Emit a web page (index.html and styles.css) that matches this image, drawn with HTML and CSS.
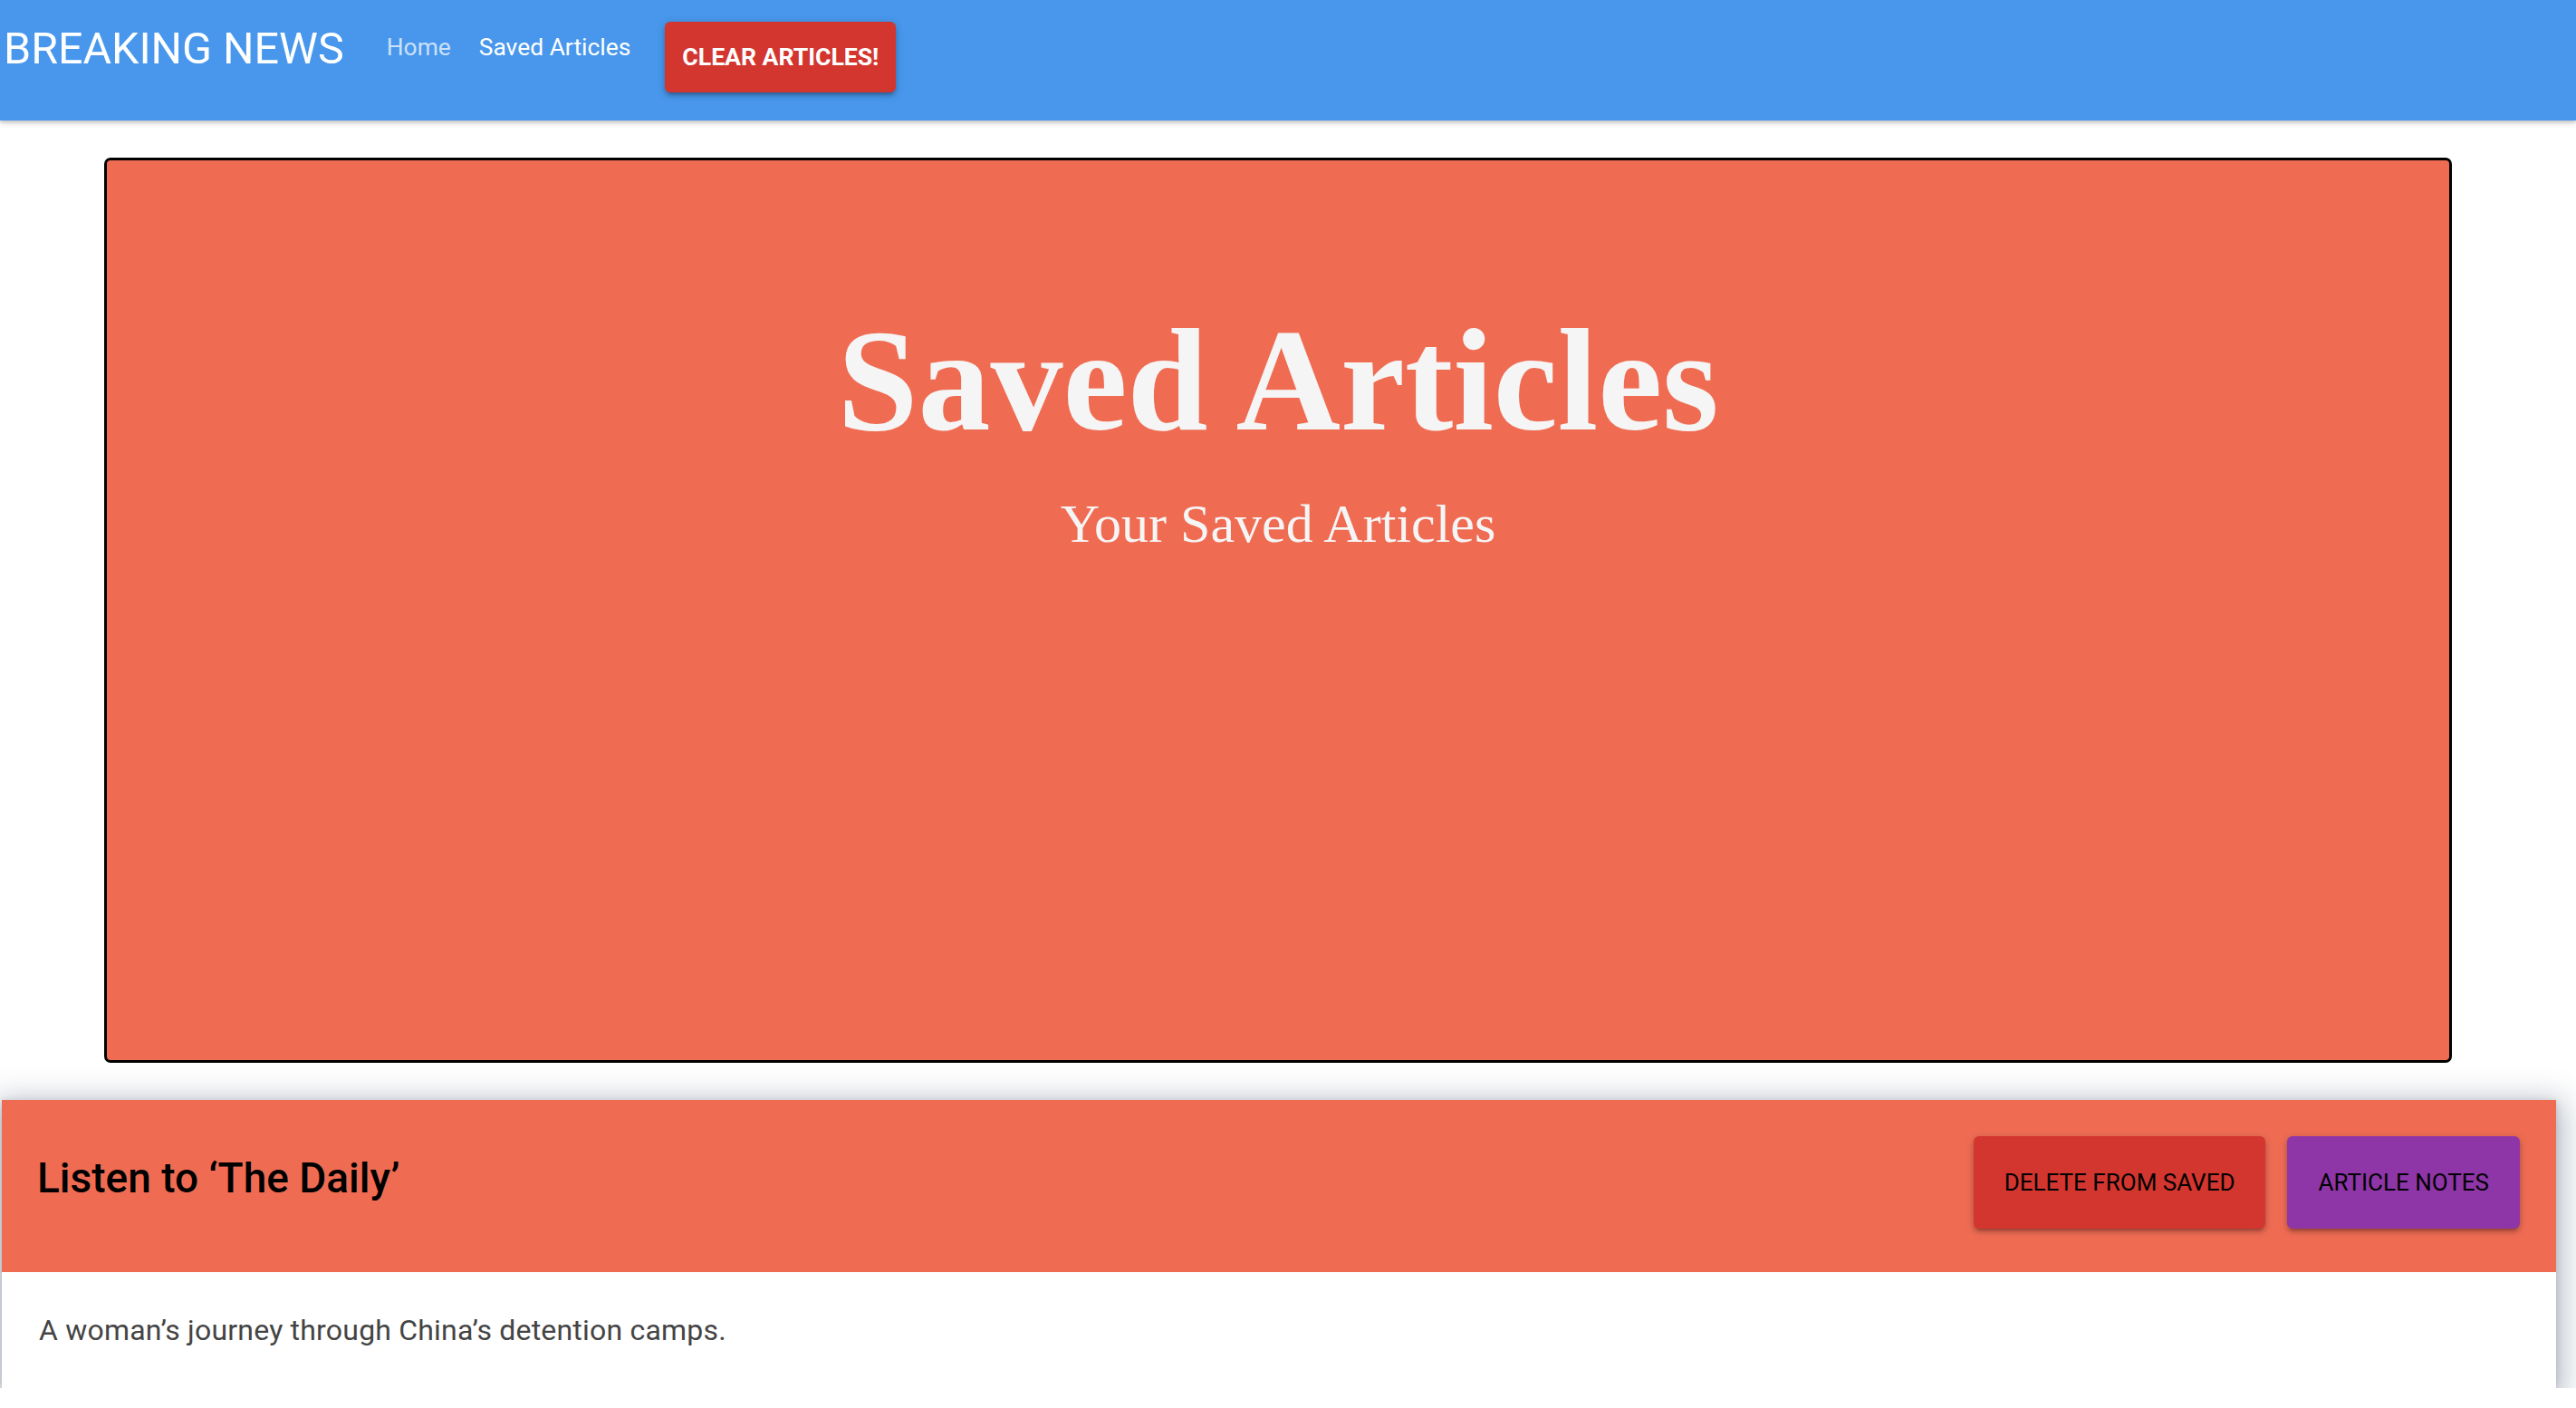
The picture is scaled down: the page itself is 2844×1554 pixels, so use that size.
FILE: index.html
```html
<!DOCTYPE html>
<html lang="en">
<head>
<meta charset="utf-8">
<title>Saved Articles</title>
<link rel="stylesheet" href="styles.css">
</head>
<body>
<nav class="navbar">
  <a class="brand" href="#">BREAKING NEWS</a>
  <ul class="nav-links">
    <li><a class="nav-link nav-link-muted" href="#">Home</a></li>
    <li><a class="nav-link" href="#">Saved Articles</a></li>
  </ul>
  <button class="btn-clear">CLEAR ARTICLES!</button>
</nav>
<main class="page">
  <section class="hero">
    <h1 class="hero-title">Saved Articles</h1>
    <h2 class="hero-subtitle">Your Saved Articles</h2>
  </section>
  <article class="card">
    <div class="card-header">
      <h3 class="card-title">Listen to ‘The Daily’</h3>
      <div class="card-actions">
        <button class="btn btn-delete">DELETE FROM SAVED</button>
        <button class="btn btn-notes">ARTICLE NOTES</button>
      </div>
    </div>
    <div class="card-body">
      <p class="card-summary">A woman’s journey through China’s detention camps.</p>
    </div>
  </article>
</main>
</body>
</html>
```
FILE: styles.css
```css
* { box-sizing: border-box; }
html, body { margin: 0; padding: 0; background: #ffffff; }
body { font-family: Roboto, "Liberation Sans", Arial, sans-serif; overflow: hidden; }

.navbar {
  display: flex;
  align-items: flex-start;
  height: 133px;
  background: #4897ec;
  box-shadow: 0 3px 6px rgba(0, 0, 0, 0.16), 0 2px 3px rgba(0, 0, 0, 0.10);
  position: relative;
  z-index: 2;
}
.brand {
  font-size: 48.4px;
  line-height: 1;
  font-weight: 400;
  color: #ffffff;
  text-decoration: none;
  margin: 30px 0 0 4px;
  white-space: nowrap;
}
.nav-links {
  display: flex;
  list-style: none;
  margin: 39px 0 0 47px;
  padding: 0;
  gap: 31px;
}
.nav-link {
  font-size: 26.4px;
  line-height: 1;
  color: #ffffff;
  text-decoration: none;
  white-space: nowrap;
}
.nav-link-muted { color: rgba(255, 255, 255, 0.72); }
.btn-clear {
  margin: 24px 0 0 38px;
  height: 78px;
  padding: 0 19px;
  border: none;
  border-radius: 6px;
  background: #d3352f;
  color: #ffffff;
  font-family: Roboto, "Liberation Sans", Arial, sans-serif;
  font-size: 26.6px;
  font-weight: 700;
  line-height: 1;
  box-shadow: 0 4px 4px rgba(0, 0, 0, 0.14), 0 6px 2px -4px rgba(0, 0, 0, 0.12), 0 2px 10px rgba(0, 0, 0, 0.2);
}

.page { width: 2822px; }

.hero {
  width: 2592px;
  height: 999px;
  margin: 41px auto 0;
  background: #ef6c53;
  border: 3px solid #000000;
  border-radius: 7px;
  text-align: center;
  color: #f5f5f5;
  font-family: "Liberation Serif", "Times New Roman", Times, serif;
}
.hero-title {
  margin: 163px 0 0;
  font-size: 160px;
  line-height: 1;
  font-weight: 700;
}
.hero-subtitle {
  margin: 48px 0 0;
  font-size: 60px;
  line-height: 1;
  font-weight: 400;
}

.card {
  width: 2820px;
  margin: 41px 0 0 2px;
  background: #ffffff;
  box-shadow: 0 8px 32px 8px rgba(45, 65, 95, 0.34), 0 2px 8px rgba(0, 0, 0, 0.14);
}
.card-header {
  display: flex;
  align-items: flex-start;
  justify-content: space-between;
  height: 190px;
  padding: 0 40px 0 39px;
  background: #ef6c53;
}
.card-title {
  margin: 63px 0 0;
  font-size: 46px;
  line-height: 1;
  font-weight: 500;
  color: #000000;
}
.card-actions {
  display: flex;
  gap: 24px;
  margin-top: 40px;
}
.btn {
  height: 102px;
  padding: 0 34px;
  border: none;
  border-radius: 6px;
  font-family: Roboto, "Liberation Sans", Arial, sans-serif;
  font-size: 26px;
  font-weight: 400;
  line-height: 1;
  color: #000000;
  box-shadow: 0 4px 4px rgba(0, 0, 0, 0.14), 0 6px 2px -4px rgba(0, 0, 0, 0.12), 0 2px 10px rgba(0, 0, 0, 0.2);
}
.btn-delete { background: #d3352f; }
.btn-notes { background: #8e36a8; }
.card-body {
  display: flex;
  align-items: center;
  height: 128px;
  padding: 0 41px;
}
.card-summary {
  margin: 0;
  font-size: 32px;
  letter-spacing: 0.2px;
  line-height: 1;
  color: #444444;
}
```
